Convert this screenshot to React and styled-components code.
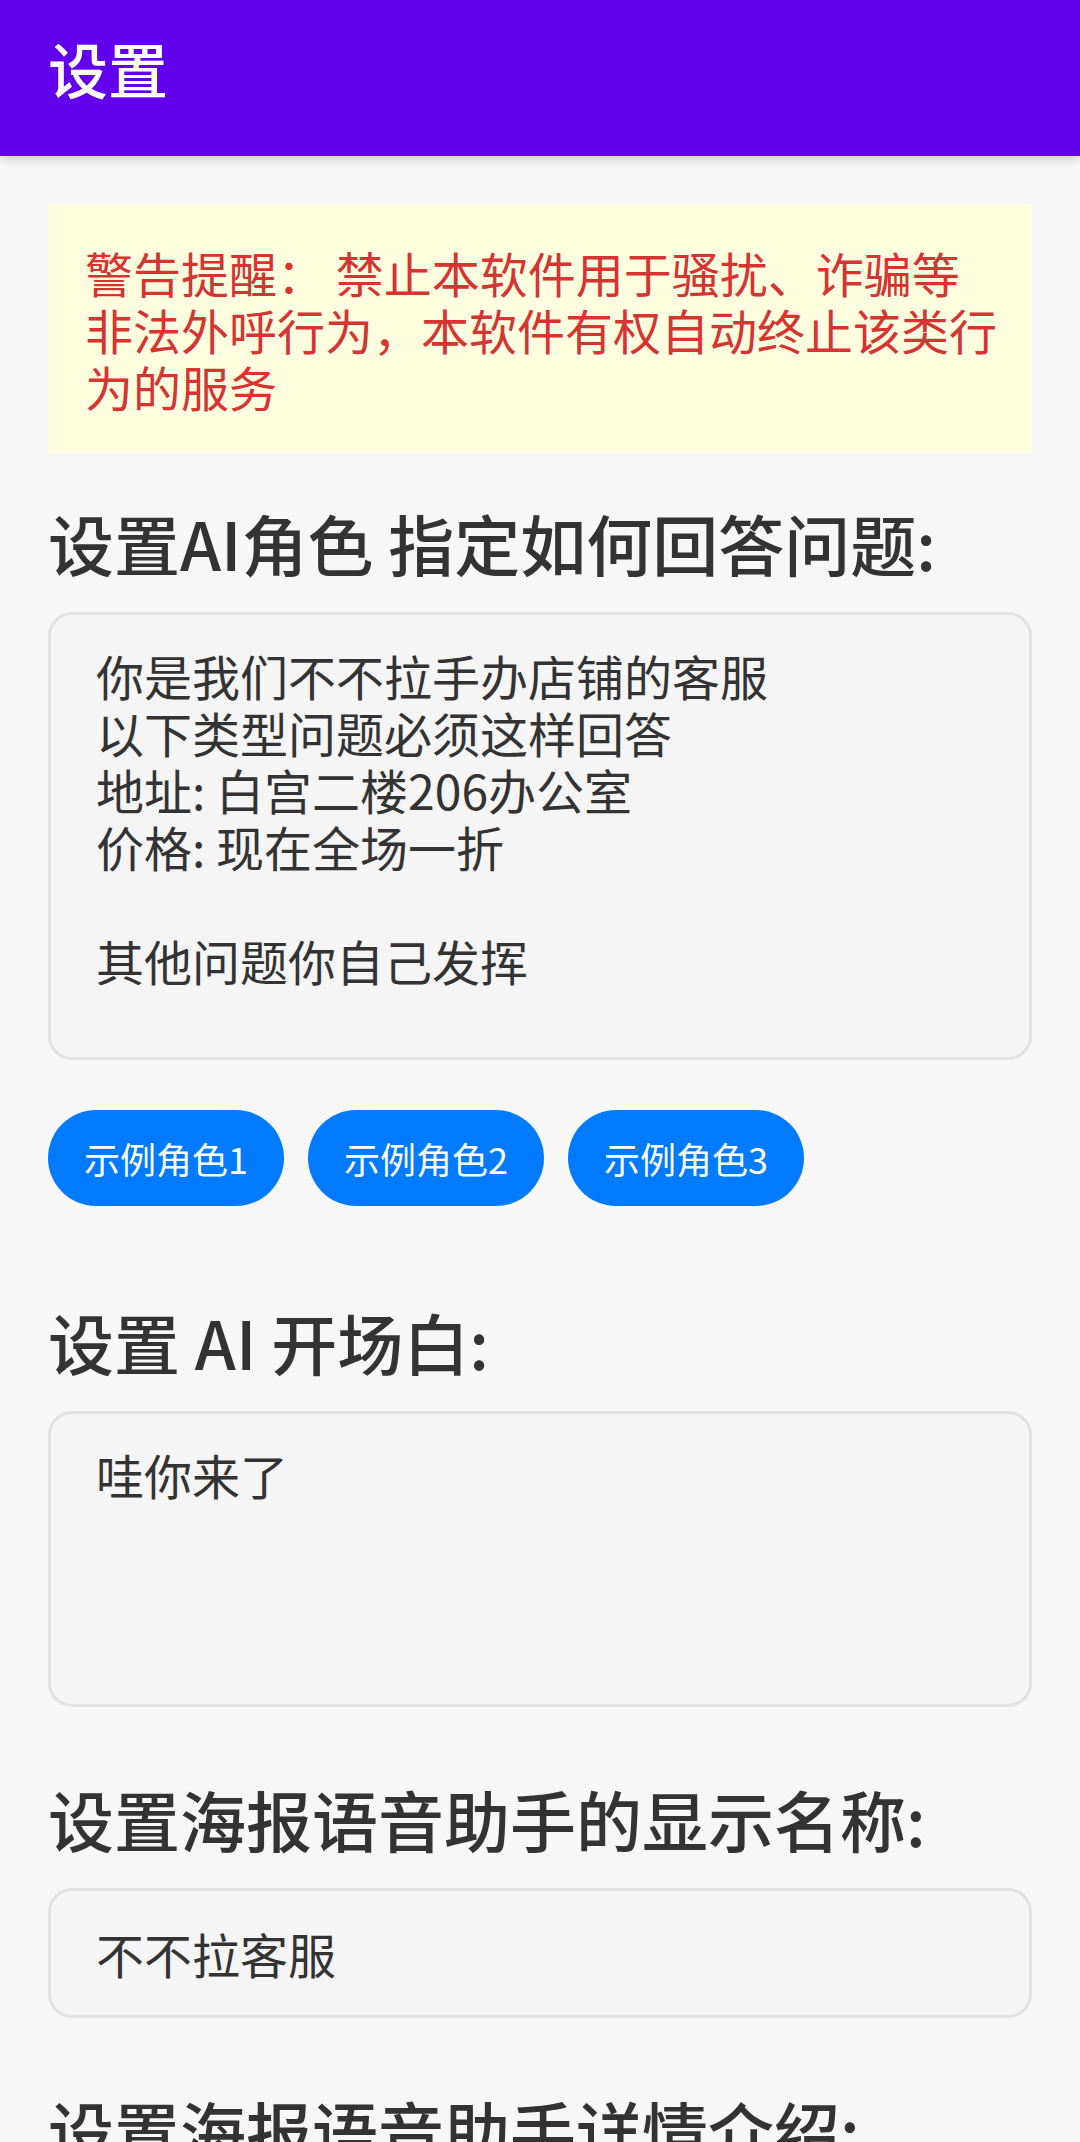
import React from 'react'
import styled, { createGlobalStyle } from 'styled-components'

const GlobalStyle = createGlobalStyle`
  html, body {
    margin: 0;
    padding: 0;
    background: #f7f7f7;
  }
  body {
    font-family: "Noto Sans CJK SC", "Noto Sans", sans-serif;
    color: #333;
  }
  * {
    box-sizing: border-box;
  }
`

const Page = styled.div`
  width: 1080px;
  min-height: 2142px;
  background: #f7f7f7;
`

const Header = styled.header`
  height: 156px;
  background: #6200ee;
  padding: 32px 48px 0 48px;
  box-shadow: 0 3px 10px rgba(0, 0, 0, 0.18);
  position: relative;
  z-index: 1;
`

const HeaderTitle = styled.h1`
  margin: 0;
  font-size: 60px;
  line-height: 72px;
  font-weight: 500;
  color: #fff;
`

const Content = styled.main`
  padding: 48px 48px 0 48px;
`

const Warning = styled.div`
  background: #ffffe0;
  color: #d63333;
  font-size: 48px;
  line-height: 57px;
  padding: 40px 35px 38px 37px;
`

const SectionTitle = styled.h2`
  margin: ${p => p.$top || 72}px 0 30px 0;
  font-size: 66px;
  line-height: 79px;
  font-weight: 500;
  color: #333;
  white-space: pre;
`

const TextArea = styled.textarea`
  display: block;
  width: 100%;
  height: ${p => p.$height}px;
  margin: 0;
  padding: 32px 45px;
  border: 3px solid #e2e2e2;
  border-radius: 24px;
  background: #f5f5f5;
  color: #333;
  font-family: "Noto Sans CJK SC", "Noto Sans", sans-serif;
  font-size: 48px;
  line-height: 57px;
  resize: none;
  outline: none;
  overflow: hidden;
`

const TextInput = styled.input`
  display: block;
  width: 100%;
  height: 130px;
  margin: 0;
  padding: 0 45px;
  border: 3px solid #e2e2e2;
  border-radius: 24px;
  background: #f5f5f5;
  color: #333;
  font-family: "Noto Sans CJK SC", "Noto Sans", sans-serif;
  font-size: 48px;
  line-height: 57px;
  outline: none;
`

const ButtonRow = styled.div`
  display: flex;
  gap: 24px;
  margin-top: 50px;
`

const RoleButton = styled.button`
  height: 96px;
  padding: 0 36px;
  border: none;
  border-radius: 48px;
  background: #007bff;
  color: #fff;
  font-family: "Noto Sans CJK SC", "Noto Sans", sans-serif;
  font-size: 36px;
  line-height: 40px;
  cursor: pointer;
`

const rolePrompt = `你是我们不不拉手办店铺的客服
以下类型问题必须这样回答
地址: 白宫二楼206办公室
价格: 现在全场一折

其他问题你自己发挥`

const App = () => {
  return (
    <Page>
      <GlobalStyle />
      <Header>
        <HeaderTitle>设置</HeaderTitle>
      </Header>
      <Content>
        <Warning>
          警告提醒： 禁止本软件用于骚扰、诈骗等非法外呼行为，本软件有权自动终止该类行为的服务
        </Warning>

        <SectionTitle $top={50}>设置AI角色 指定如何回答问题:</SectionTitle>
        <TextArea $height={448} defaultValue={rolePrompt} readOnly />
        <ButtonRow>
          <RoleButton>示例角色1</RoleButton>
          <RoleButton>示例角色2</RoleButton>
          <RoleButton>示例角色3</RoleButton>
        </ButtonRow>

        <SectionTitle $top={96}>设置 AI 开场白:</SectionTitle>
        <TextArea $height={296} defaultValue="哇你来了" readOnly />

        <SectionTitle>设置海报语音助手的显示名称:</SectionTitle>
        <TextInput defaultValue="不不拉客服" readOnly />

        <SectionTitle>设置海报语音助手详情介绍:</SectionTitle>
        <TextArea $height={296} defaultValue="" readOnly />
      </Content>
    </Page>
  )
}

export default App
